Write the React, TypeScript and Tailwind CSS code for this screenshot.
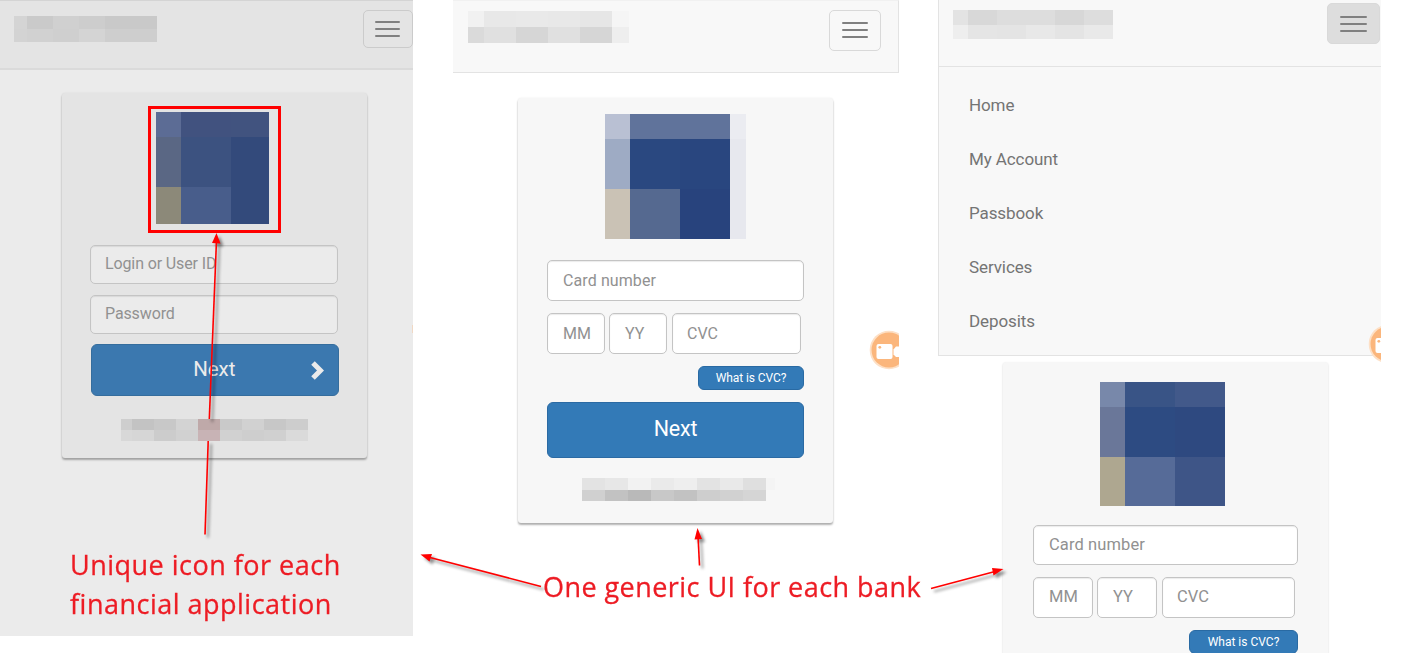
import type { ReactNode } from "react";

type MosaicProps = { cols: number[]; rows: number[]; colors: string[][]; className?: string };

function Mosaic({ cols, rows, colors, className = "" }: MosaicProps) {
  const width = cols.reduce((a, b) => a + b, 0);
  const height = rows.reduce((a, b) => a + b, 0);
  const start = (list: number[], i: number) => list.slice(0, i).reduce((a, b) => a + b, 0);
  return (
    <svg width={width} height={height} shapeRendering="crispEdges" className={`block shrink-0 ${className}`}>
      {colors.map((row, r) =>
        row.map((fill, c) => (
          <rect key={`${r}-${c}`} x={start(cols, c)} y={start(rows, r)} width={cols[c]} height={rows[r]} fill={fill} />
        )),
      )}
    </svg>
  );
}

function MenuBars({ className = "" }: { className?: string }) {
  return (
    <span className={`flex flex-col gap-[5px] ${className}`}>
      <span className="h-0.5 rounded-[1px] bg-[#808080]" />
      <span className="h-0.5 rounded-[1px] bg-[#808080]" />
      <span className="h-0.5 rounded-[1px] bg-[#808080]" />
    </span>
  );
}

function Field({ children, className = "" }: { children: ReactNode; className?: string }) {
  return (
    <div className={`flex shrink-0 items-center rounded-[5px] border border-[#c4c4c4] text-[#919191] shadow-[inset_0_1px_1px_rgba(0,0,0,0.08)] ${className}`}>
      {children}
    </div>
  );
}

function RecordButton({ className = "" }: { className?: string }) {
  return (
    <svg width="40" height="40" viewBox="0 0 40 40" className={`absolute ${className}`}>
      <circle cx="20" cy="20" r="19.3" fill="#fde0c6" />
      <circle cx="20" cy="20" r="17.5" fill="#fbb67c" />
      <rect x="7.5" y="14" width="16" height="15" rx="2" fill="#fff" />
      <path d="M24.5 19.5 L27 16.5 H32 V27 H27 L24.5 24.5Z" fill="#fff" />
      <circle cx="10.8" cy="17.3" r="1.4" fill="#fbb67c" />
    </svg>
  );
}

function LoginScreen() {
  return (
    <section className="relative flex h-[636px] w-[413px] shrink-0 flex-col overflow-hidden bg-[#ebebeb]">
      <header className="flex h-[70px] items-start justify-between border-t border-b-2 border-t-[#d4d4d4] border-b-[#dadada] bg-[#e4e4e4] pl-3.5">
        <Mosaic
          className="mt-[15px]"
          cols={[13, 26, 26, 26, 26, 26]}
          rows={[13, 13]}
          colors={[
            ["#d4d4d4", "#cacaca", "#d0d0d0", "#cdcdcd", "#c9c9c9", "#c9c9c9"],
            ["#d3d3d3", "#d1d1d1", "#cfcfcf", "#d4d4d4", "#cecece", "#cecece"],
          ]}
        />
        <div className="mt-[9px] flex h-[38px] w-[50px] items-center justify-center rounded-[5px] border border-[#cbcbcb] pr-px">
          <MenuBars className="w-[25px]" />
        </div>
      </header>
      <div className="mt-[23px] ml-[62px] flex h-[365px] w-[305px] flex-col items-center rounded-[3px] bg-[#e4e4e4] shadow-[0_2px_2px_rgba(0,0,0,0.3),0_0_2px_rgba(0,0,0,0.08)]">
        <div className="mt-[13px] flex h-[127px] w-[133px] shrink-0 border-[3px] border-[#ff0000] pt-[3px] pl-[5px]">
          <Mosaic
            cols={[25, 50, 38]}
            rows={[25, 50, 37]}
            colors={[
              ["#5c6c95", "#41527f", "#41537f"],
              ["#5a6784", "#3c5280", "#334a7b"],
              ["#8c8979", "#485d8b", "#334a7b"],
            ]}
          />
        </div>
        <Field className="mt-3 -ml-px h-[39px] w-[248px] bg-[#ebebeb] pb-0.5 pl-3.5 text-[16px] tracking-[-0.12px]">Login or User ID</Field>
        <Field className="mt-[11px] -ml-px h-[39px] w-[248px] bg-[#ebebeb] pb-0.5 pl-3.5 text-[16px] tracking-[-0.12px]">Password</Field>
        <div className="mt-2.5 flex h-[52px] w-[248px] shrink-0 items-center justify-end rounded-[6px] border border-[#356d9d] bg-[#3b78af] pr-3.5 text-[#ebebeb]">
          <span className="mr-[75px] pb-0.5 text-[20.5px]">Next</span>
          <svg width="13" height="19" viewBox="0 0 13 19">
            <path d="M2 2 L9.5 9.5 L2 17" fill="none" stroke="#ebebeb" strokeWidth="5" />
          </svg>
        </div>
        <Mosaic
          className="mt-[23px]"
          cols={[11, 22, 22, 22, 22, 22, 22, 22, 22]}
          rows={[11, 11]}
          colors={[
            ["#cecece", "#c3c3c3", "#c8c8c8", "#d3d3d3", "#bfa9a9", "#c9c9c9", "#d1d1d1", "#c7c7c7", "#cdcdcd"],
            ["#d8d8d8", "#d6d6d6", "#cccccc", "#d1d1d1", "#c8b3b5", "#d1d1d1", "#cecece", "#d0d0d0", "#dadada"],
          ]}
        />
      </div>
      <p className="mt-[87px] ml-[69.5px] w-[340px] origin-left scale-x-[0.965] font-['Open_Sans',sans-serif] text-[28px] leading-[39px] tracking-[0.5px] whitespace-nowrap text-[#ed1c24] [-webkit-text-stroke:0.3px_#ed1c24]">
        Unique icon for each
        <br />
        financial application
      </p>
      <span className="absolute top-[325px] right-0 h-2 w-px bg-[#f0d8c4]" />
    </section>
  );
}

function CardScreen() {
  return (
    <section className="relative ml-10 flex h-[636px] w-[446px] shrink-0 flex-col overflow-hidden">
      <header className="flex h-[73px] shrink-0 items-start justify-between border-t border-r border-b border-t-[#f1f1f1] border-r-[#e3e3e3] border-b-[#e3e3e3] bg-[#f8f8f8] pr-[17px] pl-[15px]">
        <Mosaic
          className="mt-2.5"
          cols={[16, 32, 32, 32, 32, 17]}
          rows={[16, 16]}
          colors={[
            ["#f1f1f1", "#e8e8e8", "#e9e9e9", "#e8e8e8", "#e6e6e6", "#f5f5f5"],
            ["#dadada", "#e0e0e0", "#d6d6d6", "#e0e0e0", "#d6d6d6", "#eeeeee"],
          ]}
        />
        <div className="mt-[9px] flex h-[41px] w-[52px] items-center justify-center rounded-[5px] border border-[#d9d9d9] pb-px">
          <MenuBars className="w-[26px]" />
        </div>
      </header>
      <div className="mt-[25px] ml-[65px] flex h-[425px] w-[315px] shrink-0 flex-col items-start rounded-[3px] bg-[#f7f7f7] pl-[29px] shadow-[0_2px_2px_rgba(0,0,0,0.3),0_0_2px_rgba(0,0,0,0.08)]">
        <Mosaic
          className="mt-4 ml-[58px]"
          cols={[25, 50, 50, 16]}
          rows={[25, 50, 50]}
          colors={[
            ["#b9c0d3", "#60739b", "#60739b", "#ebecf1"],
            ["#9eabc4", "#2a4880", "#29467f", "#e7e8ee"],
            ["#cac2b5", "#556990", "#28437d", "#e7e8ee"],
          ]}
        />
        <Field className="mt-[21px] h-[41px] w-[257px] bg-white pl-[15px] text-[16px] tracking-[0.1px]">Card number</Field>
        <div className="mt-3 flex h-[41px]">
          <Field className="w-[58px] bg-white pl-[15px] text-[16px]">MM</Field>
          <Field className="ml-1 w-[58px] bg-white pl-[15px] text-[16px]">YY</Field>
          <Field className="ml-[5px] w-[129px] bg-white pl-3.5 text-[16px]">CVC</Field>
        </div>
        <div className="mt-3 ml-[151px] flex h-6 w-[106px] items-center justify-center rounded-[6px] border border-[#296aa3] bg-[#337ab7] text-[12px] tracking-[-0.1px] text-white">
          What is CVC?
        </div>
        <div className="mt-3 flex h-14 w-[257px] items-center justify-center rounded-[6px] border border-[#2b6aa3] bg-[#337ab7] pb-0.5 text-[21.5px] tracking-[-0.2px] text-white">
          Next
        </div>
        <Mosaic
          className="mt-5 ml-[35px]"
          cols={[23, 23, 23, 23, 23, 23, 23, 23, 9]}
          rows={[12, 11]}
          colors={[
            ["#e3e3e3", "#e7e7e7", "#f2f2f2", "#eaeaea", "#eeeeee", "#e3e3e3", "#e9e9e9", "#dfdfdf", "#f4f4f4"],
            ["#d0d0d0", "#c2c2c2", "#b9b9b9", "#c8c8c8", "#c2c2c2", "#cecece", "#d1d1d1", "#d5d5d5", "#f7f7f7"],
          ]}
        />
      </div>
      <RecordButton className="top-[330px] left-[416px]" />
    </section>
  );
}

function MenuScreen() {
  return (
    <section className="relative ml-[39px] flex h-[653px] w-[443px] shrink-0 flex-col overflow-hidden">
      <nav className="h-[356px] shrink-0 border-b border-l border-[#e3e3e3] bg-[#f8f8f8]">
        <div className="flex h-[67px] items-start justify-between border-b border-[#e3e3e3] pr-px pl-3.5">
          <Mosaic
            className="mt-2.5"
            cols={[15, 29, 29, 29, 29, 29]}
            rows={[15, 14]}
            colors={[
              ["#e3e3e3", "#d8d8d8", "#dddddd", "#dddddd", "#d7d7d7", "#dddddd"],
              ["#eeeeee", "#e5e5e5", "#e4e4e4", "#e8e8e8", "#e4e4e4", "#e9e9e9"],
            ]}
          />
          <div className="mt-[3px] flex h-[41px] w-[53px] items-center justify-center rounded-[5px] border border-[#d9d9d9] bg-[#dddddd]">
            <MenuBars className="w-[27px]" />
          </div>
        </div>
        <ul className="mt-[12px] ml-[30px] text-[17px] tracking-[-0.1px] text-[#747474]">
          {["Home", "My Account", "Passbook", "Services", "Deposits"].map((item) => (
            <li key={item} className="flex h-[54px] items-center">
              {item}
            </li>
          ))}
        </ul>
      </nav>
      <div className="mt-1.5 ml-[65px] flex h-[430px] w-[325px] shrink-0 flex-col items-start rounded-[3px] bg-[#f7f7f7] pl-[30px] shadow-[0_1px_2px_rgba(0,0,0,0.2)]">
        <Mosaic
          className="mt-5 ml-[67px]"
          cols={[25, 50, 50]}
          rows={[25, 50, 49]}
          colors={[
            ["#7888aa", "#395486", "#42598a"],
            ["#6a7799", "#2d4b82", "#2e4980"],
            ["#aea790", "#566b98", "#3e5587"],
          ]}
        />
        <Field className="mt-[19px] h-10 w-[265px] bg-white pl-[15px] text-[16.5px] tracking-[0.1px]">Card number</Field>
        <div className="mt-3 flex h-[41px]">
          <Field className="w-[60px] bg-white pl-[15px] text-[16.5px]">MM</Field>
          <Field className="ml-1 w-[60px] bg-white pl-[15px] text-[16.5px]">YY</Field>
          <Field className="ml-[5px] w-[133px] bg-white pl-3.5 text-[16.5px]">CVC</Field>
        </div>
        <div className="mt-3 ml-[156px] flex h-6 w-[109px] items-center justify-center rounded-[6px] border border-[#296aa3] bg-[#337ab7] text-[12px] text-white">
          What is CVC?
        </div>
      </div>
      <RecordButton className="top-[324px] left-[430px]" />
    </section>
  );
}

function Arrows() {
  return (
    <svg
      width="1415"
      height="658"
      viewBox="0 0 1415 658"
      className="pointer-events-none absolute top-0 left-0 drop-shadow-[3px_3px_1.5px_rgba(0,0,0,0.45)]"
    >
      <g stroke="#ff0000" strokeWidth="1.6" fill="none">
        <path d="M205 534.5 L208.2 441" />
        <path d="M209.3 419 L216.5 240" />
        <path d="M541 586.5 L430 557.5" />
        <path d="M699.5 565.5 L698 536" />
        <path d="M931 588.5 L995 571.5" />
      </g>
      <g fill="#ff0000">
        <path d="M216.5 233 L220.5 243.5 L212 243Z" />
        <path d="M420.5 554.5 L432 554 L429.5 561.5Z" />
        <path d="M697.5 528 L702 539 L694.5 539.5Z" />
        <path d="M1003.5 569 L993.5 575.5 L992 568Z" />
      </g>
    </svg>
  );
}

export default function App() {
  return (
    <main className="relative flex h-[658px] w-[1415px] items-start overflow-hidden bg-white font-[Roboto,sans-serif]">
      <LoginScreen />
      <CardScreen />
      <MenuScreen />
      <p className="absolute top-[567px] left-[542.5px] origin-left scale-x-[0.965] font-['Open_Sans',sans-serif] text-[28px] leading-[39px] tracking-[0.45px] whitespace-nowrap text-[#ed1c24] [-webkit-text-stroke:0.3px_#ed1c24]">
        One generic UI for each bank
      </p>
      <Arrows />
    </main>
  );
}
